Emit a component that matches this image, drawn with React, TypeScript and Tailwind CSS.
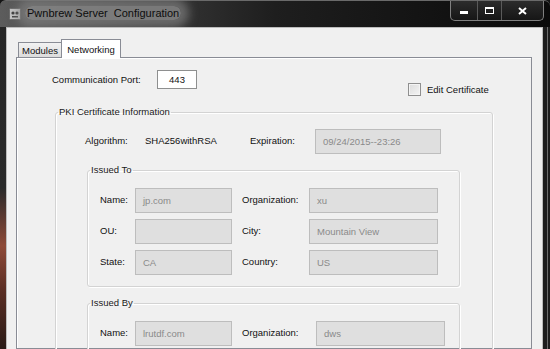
import React from "react";

const font = "font-['Liberation_Sans',Arial,sans-serif]";

function ReadOnlyBox({ value, width }: { value: string; width: string }) {
  return (
    <div
      className={`${width} h-[25px] shrink-0 border border-[#bdbdbd] bg-[#dfdfdf] pl-[7px] text-[9.5px] leading-[23px] text-[#8a8a8a]`}
    >
      {value}
    </div>
  );
}

function Row({
  label,
  value,
  otherLabel,
  otherValue,
  otherLabelWidth = "w-[67px]",
}: {
  label: string;
  value: string;
  otherLabel: string;
  otherValue: string;
  otherLabelWidth?: string;
}) {
  return (
    <div className="flex items-center">
      <span className="w-[35px] shrink-0">{label}</span>
      <ReadOnlyBox value={value} width="w-[97px]" />
      <span className={`ml-[10px] ${otherLabelWidth} shrink-0`}>{otherLabel}</span>
      <ReadOnlyBox value={otherValue} width="w-[129px]" />
    </div>
  );
}

function GroupBox({
  title,
  className,
  children,
}: {
  title: string;
  className: string;
  children: React.ReactNode;
}) {
  return (
    <fieldset
      className={`rounded-[3px] border border-[#d3d3d3] shadow-[inset_1px_1px_0_#ffffff,1px_1px_0_#ffffff] ${className}`}
    >
      <legend className="ml-[2px] px-[1px] text-[9.5px] leading-[12px] text-[#1a1a1a]">
        {title}
      </legend>
      {children}
    </fieldset>
  );
}

function TitleBar() {
  return (
    <div className="flex h-[27px] shrink-0 items-start rounded-tl-[6px] rounded-tr-[6px] border-t border-[#6a6a6a] bg-gradient-to-r from-[#5c5c5c] via-[#1e1e1e] to-[#0b0b0b]">
      <svg className="ml-[9px] mt-[7px] shrink-0" width="12" height="12" viewBox="0 0 12 12">
        <rect x="0.5" y="0.5" width="11" height="11" rx="1" fill="#c4c4c4" stroke="#6b6b6b" />
        <circle cx="4" cy="5" r="1.6" fill="#3a3a3a" />
        <circle cx="8" cy="5" r="1.6" fill="#3a3a3a" />
        <path d="M3 8.5h6M4 8v2M6 8v2M8 8v2" stroke="#3a3a3a" strokeWidth="0.9" />
      </svg>
      <span className="ml-[4px] mt-[5px] whitespace-pre rounded-full bg-[#8a8a8a]/80 px-[2px] text-[11px] leading-[14px] text-[#0d0d0d] shadow-[0_0_10px_8px_rgba(128,128,128,0.7)]">
        Pwnbrew Server  Configuration
      </span>
      <div className="ml-auto mr-[6px] flex h-[20px] overflow-hidden rounded-b-[5px] border border-t-0 border-[#808080] bg-gradient-to-b from-[#2c2c2c] to-[#161616]">
        <div className="flex w-[26px] items-end justify-center pb-[6px]">
          <div className="h-[3px] w-[8px] bg-white" />
        </div>
        <div className="flex w-[24px] items-center justify-center border-l border-[#5a5a5a]">
          <div className="h-[7px] w-[9px] border border-t-[2px] border-white" />
        </div>
        <div className="flex w-[42px] items-center justify-center border-l border-[#5a5a5a]">
          <svg width="9" height="8" viewBox="0 0 9 8">
            <path d="M1 1l7 6M8 1L1 7" stroke="#ffffff" strokeWidth="2" />
          </svg>
        </div>
      </div>
    </div>
  );
}

export default function App() {
  return (
    <div className={`flex h-[349px] w-[550px] flex-col overflow-hidden bg-[#141414] ${font} text-[9.5px] text-[#111111]`}>
      <TitleBar />
      <div className="flex min-h-0 flex-1">
        <div className="w-[6px] shrink-0 bg-[linear-gradient(to_bottom,#262626_0%,#2a2a2a_50%,#8e4a38_68%,#5a2e24_82%,#2a1b17_100%)]" />
        <div className="flex w-[537px] shrink-0 flex-col border-x border-t border-[#bcbcbc] bg-[#f0f0f0] pl-[9px] pr-[10px] pt-[11px]">
          {/* Tabs */}
          <div className="relative z-10 flex items-end pl-[2px]">
            <div className="flex h-[15px] w-[44px] items-center justify-center border border-b-0 border-[#898c95] bg-gradient-to-b from-[#f2f2f2] to-[#dcdcdc] leading-[13px]">
              Modules
            </div>
            <div className="-mb-px -ml-px flex h-[19px] w-[60px] items-center justify-center border border-b-0 border-[#898c95] bg-white pt-[1px] leading-[13px]">
              Networking
            </div>
          </div>
          {/* Panel */}
          <div className="min-h-0 flex-1 border border-[#898c95] bg-[#f0f0f0] shadow-[inset_1px_1px_0_#ffffff]">
            <div className="flex items-start pl-[35px] pt-[12px]">
              <span className="w-[105px] shrink-0 leading-[19px]">Communication Port:</span>
              <div className="h-[19px] w-[40px] shrink-0 border border-[#8e8f8f] bg-white text-center leading-[17px]">
                443
              </div>
              <div className="ml-[211px] mt-[13px] flex items-center">
                <div className="h-[13px] w-[13px] border border-[#8f8f8f] bg-gradient-to-br from-[#dcdcdc] to-[#f4f4f4] shadow-[inset_0_0_0_1px_#f4f4f4]" />
                <span className="ml-[6px] leading-[13px]">Edit Certificate</span>
              </div>
            </div>

            <GroupBox title="PKI Certificate Information" className="ml-[38px] mt-[10px] w-[438px] pb-[10px]">
              <div className="flex items-center pl-[29px] pt-[11px]">
                <span className="w-[60px] shrink-0">Algorithm:</span>
                <span className="w-[105px] shrink-0">SHA256withRSA</span>
                <span className="w-[65px] shrink-0">Expiration:</span>
                <ReadOnlyBox value="09/24/2015--23:26" width="w-[126px]" />
              </div>

              <GroupBox title="Issued To" className="ml-[31px] mt-[10px] w-[373px]">
                <div className="flex flex-col gap-[6px] pb-[11px] pl-[12px] pt-[12px]">
                  <Row label="Name:" value="jp.com" otherLabel="Organization:" otherValue="xu" />
                  <Row label="OU:" value="" otherLabel="City:" otherValue="Mountain View" />
                  <Row label="State:" value="CA" otherLabel="Country:" otherValue="US" />
                </div>
              </GroupBox>

              <GroupBox title="Issued By" className="ml-[31px] mt-[10px] w-[373px]">
                <div className="flex flex-col gap-[6px] pb-[11px] pl-[12px] pt-[12px]">
                  <Row
                    label="Name:"
                    value="lrutdf.com"
                    otherLabel="Organization:"
                    otherValue="dws"
                    otherLabelWidth="w-[74px]"
                  />
                </div>
              </GroupBox>
            </GroupBox>
          </div>
        </div>
        <div className="flex w-[7px] shrink-0 bg-[#1e1e1e]">
          <div className="ml-[4px] w-px bg-[#6e6e6e]" />
        </div>
      </div>
    </div>
  );
}
